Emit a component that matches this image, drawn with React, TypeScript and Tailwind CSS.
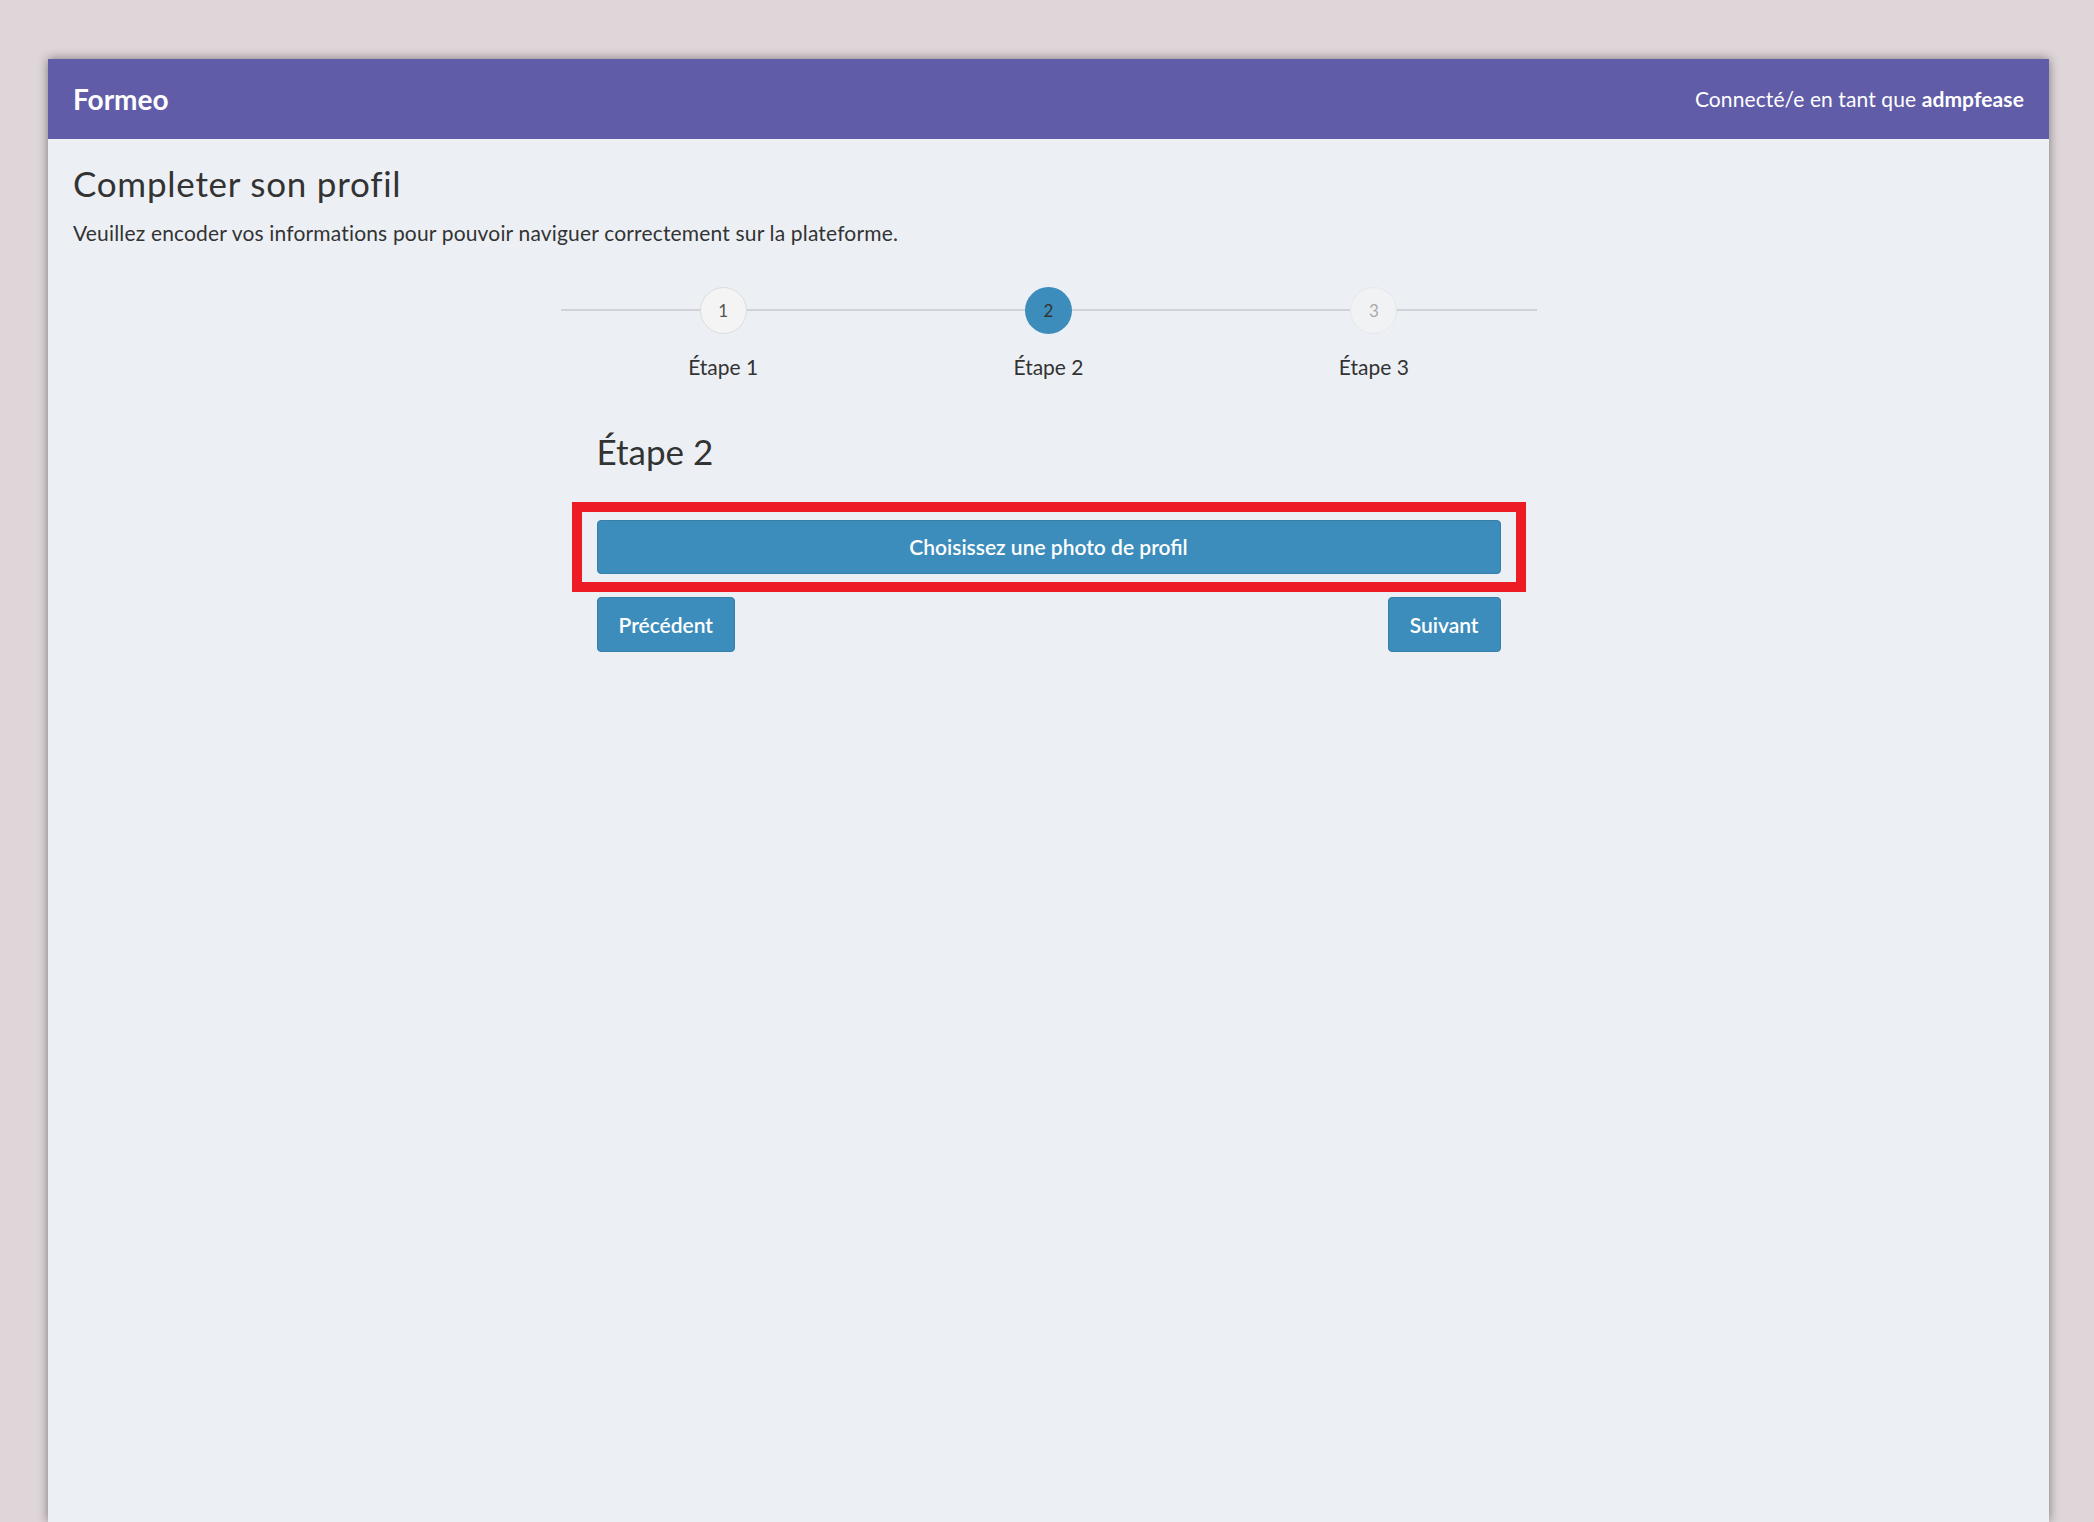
import React from "react";

const steps = [
  { n: 1, label: "Étape 1", state: "done" },
  { n: 2, label: "Étape 2", state: "active" },
  { n: 3, label: "Étape 3", state: "todo" },
];

function Stepper() {
  return (
    <div className="mx-auto mt-[41px] grid w-[976px] grid-cols-3">
      {steps.map((s) => (
        <div key={s.n} className="relative flex flex-col items-center">
          {/* connector line behind the circle */}
          <div className="absolute left-0 right-0 top-[22px] h-[2px] bg-[#cfd3d9]" />
          <div
            className={
              s.state === "active"
                ? "relative flex h-[47px] w-[47px] items-center justify-center rounded-full bg-[#3c8dbc] text-[17px] text-[#333]"
                : s.state === "done"
                ? "relative flex h-[47px] w-[47px] items-center justify-center rounded-full border border-[#dcdcdc] bg-[#f4f4f4] text-[17px] text-[#555]"
                : "relative flex h-[47px] w-[47px] items-center justify-center rounded-full border border-[#e6e7ea] bg-[#f1f2f4] text-[17px] text-[#aaa]"
            }
          >
            {s.n}
          </div>
          <div className="mt-[20px] text-[21px] leading-[26px] text-[#333]">{s.label}</div>
        </div>
      ))}
    </div>
  );
}

export default function App() {
  return (
    <div
      className="min-h-screen bg-[#dfd6da] pt-[59px]"
      style={{ fontFamily: "Lato, 'Noto Sans', sans-serif" }}
    >
      <div className="ml-[48px] h-[1463px] w-[2001px] bg-[#ecf0f5] shadow-[0_0_10px_rgba(0,0,0,0.45)]">
        <header className="flex h-[80px] items-center justify-between bg-[#605ca8] px-[25px] text-white">
          <span className="text-[28px] font-bold">Formeo</span>
          <span className="text-[21px] tracking-[0.1px]">
            Connecté/e en tant que <b className="font-bold">admpfease</b>
          </span>
        </header>

        <div className="px-[25px]">
          <h1 className="pt-[23px] text-[35px] leading-[42px] font-normal tracking-[0.75px] text-[#333]">
            Completer son profil
          </h1>
          <p className="mt-[16px] text-[21px] leading-[26px] tracking-[0.17px] text-[#333]">
            Veuillez encoder vos informations pour pouvoir naviguer correctement sur la plateforme.
          </p>

          <Stepper />

          <div className="mx-auto w-[904px]">
            <h2 className="mt-[50px] text-[35px] leading-[42px] font-normal text-[#333]">Étape 2</h2>

            <div className="mt-[30px] -mx-[25px] border-[10px] border-[#ed1c24] px-[15px] py-[8px]">
              <button className="h-[54px] w-full rounded-[4px] border border-[#367fa9] bg-[#3c8dbc] text-[21px] font-semibold text-white">
                Choisissez une photo de profil
              </button>
            </div>

            <div className="mt-[5px] flex justify-between">
              <button className="h-[55px] rounded-[4px] border border-[#367fa9] bg-[#3c8dbc] px-[21px] text-[21px] font-semibold text-white">
                Précédent
              </button>
              <button className="h-[55px] rounded-[4px] border border-[#367fa9] bg-[#3c8dbc] px-[21px] text-[21px] font-semibold text-white">
                Suivant
              </button>
            </div>
          </div>
        </div>
      </div>
    </div>
  );
}
